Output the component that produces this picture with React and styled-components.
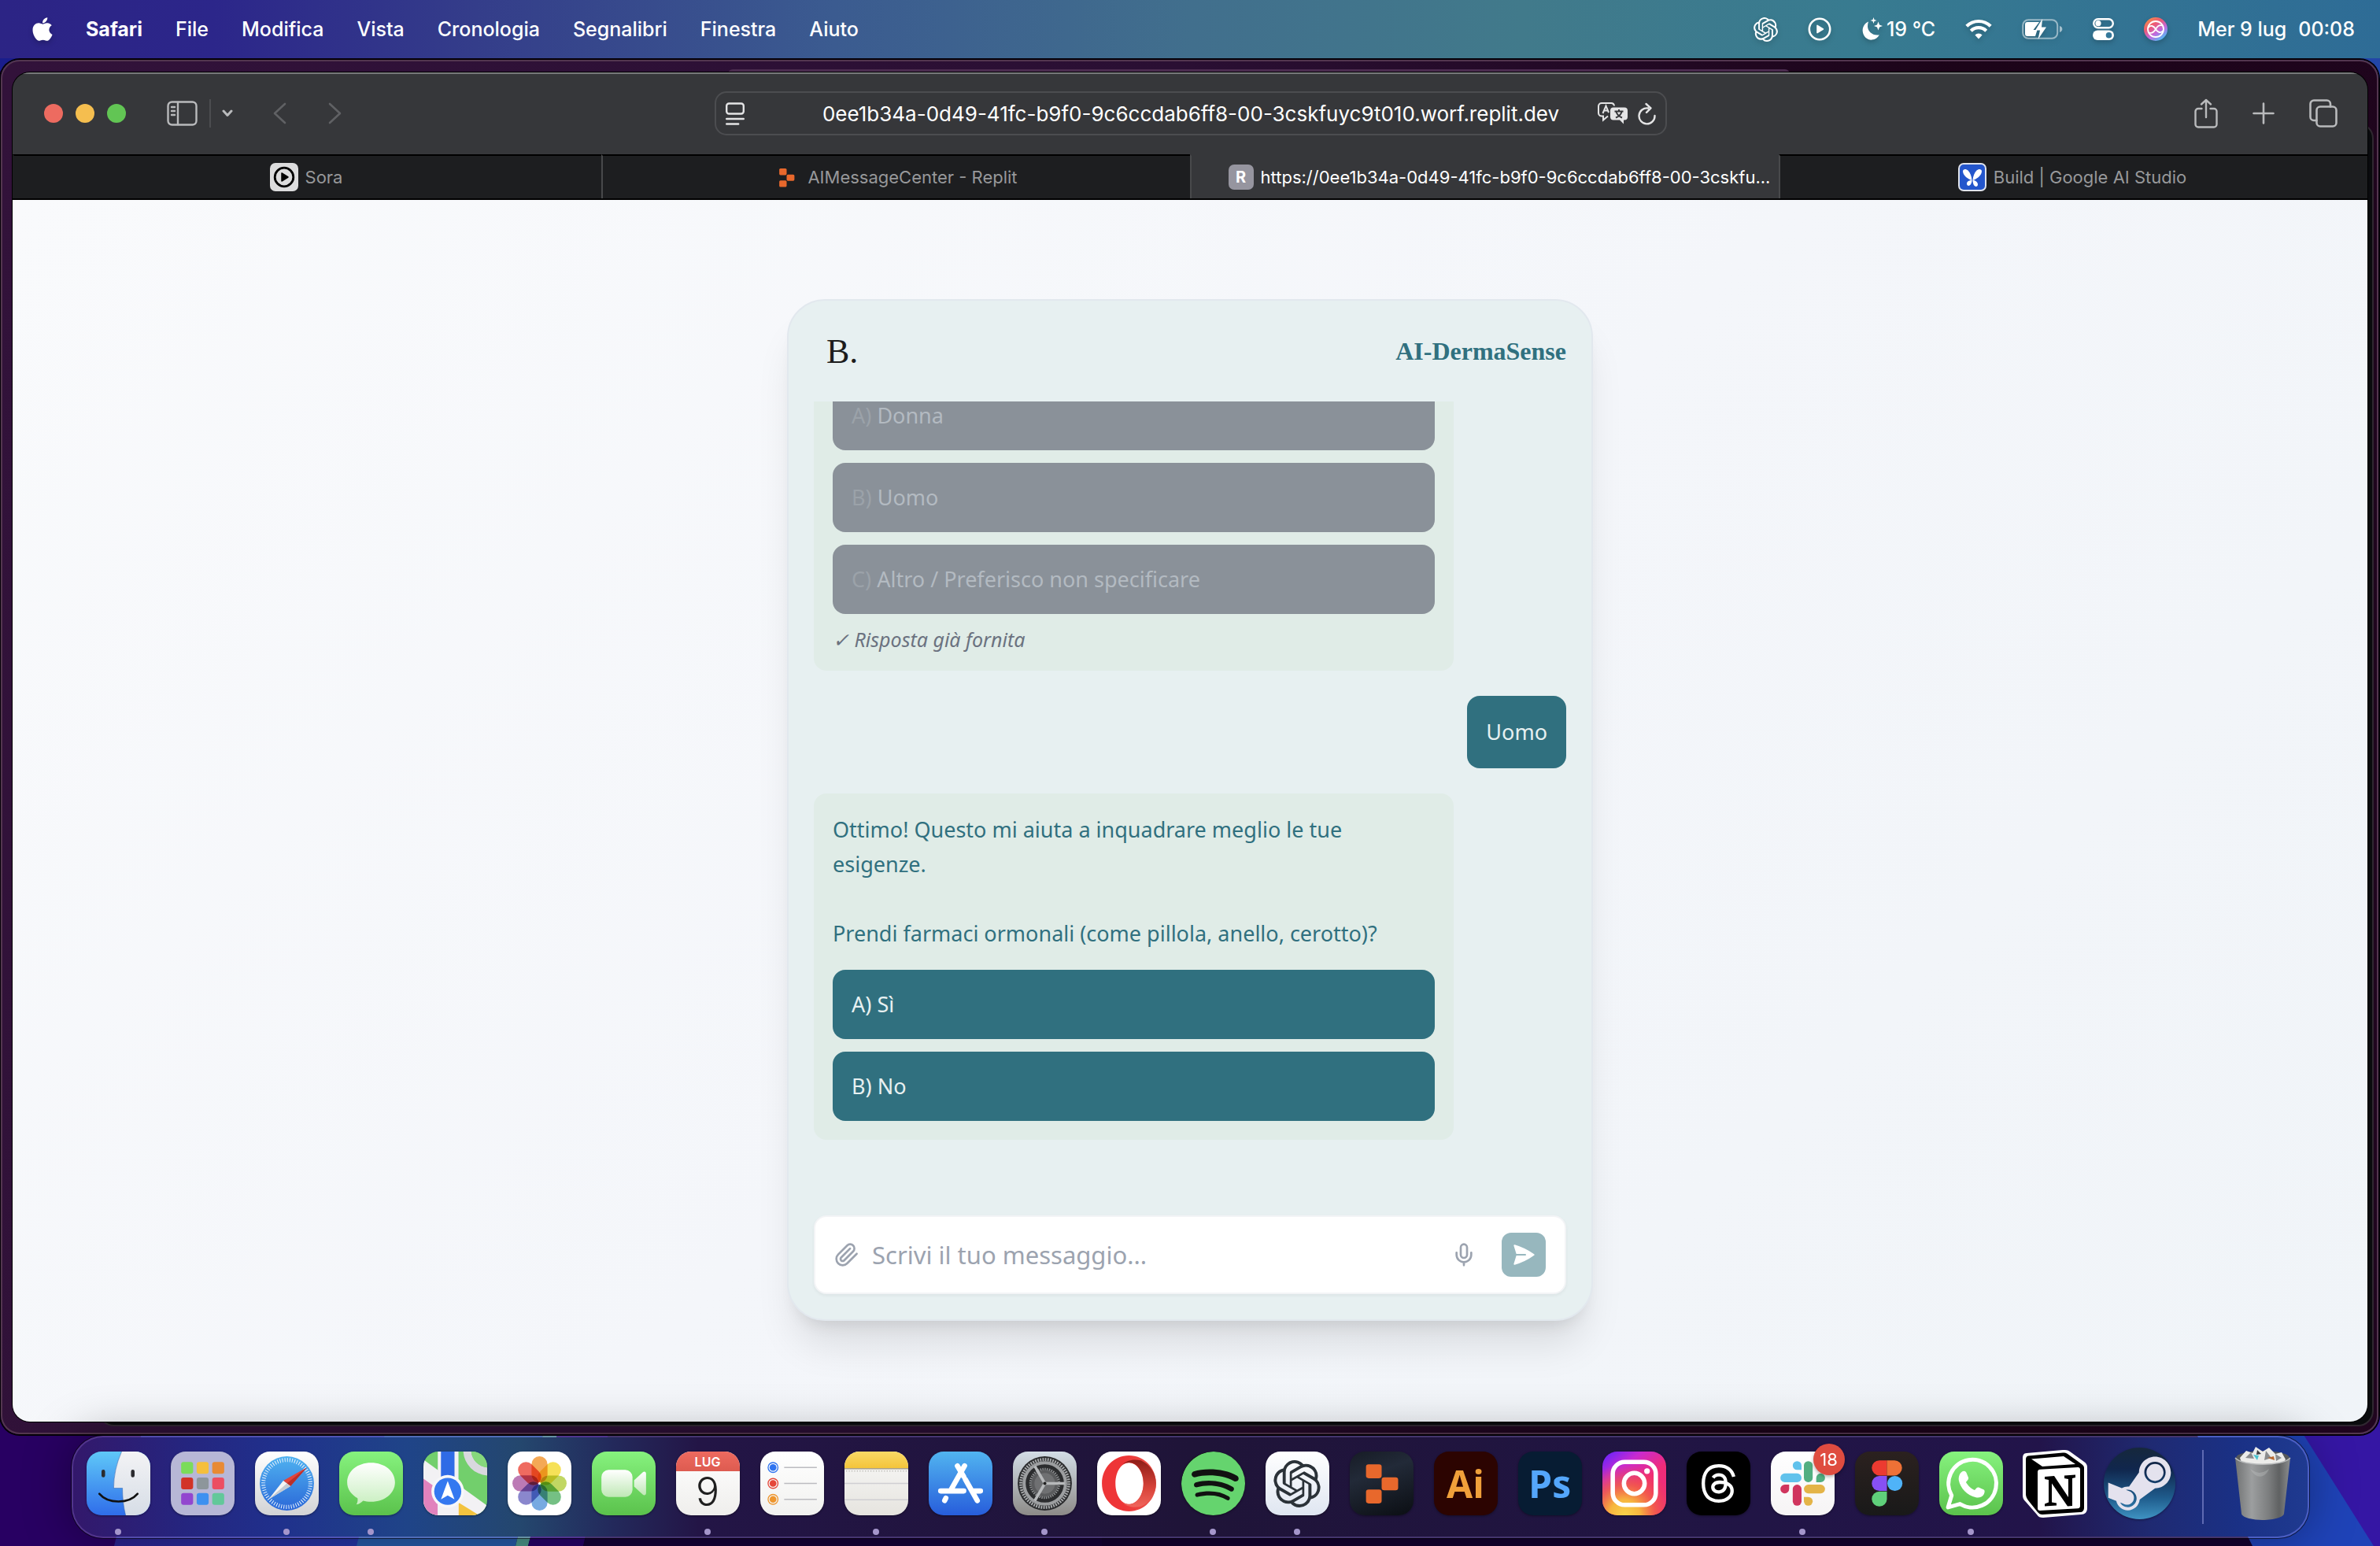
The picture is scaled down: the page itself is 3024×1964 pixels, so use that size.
import React from "react";
import styled, { createGlobalStyle, css } from "styled-components";
import { FaApple, FaSteamSymbol } from "react-icons/fa6";
import { HiPaperAirplane } from "react-icons/hi2";
import { SiOpenai, SiSpotify, SiThreads } from "react-icons/si";

const UI = `Inter, "Liberation Sans", sans-serif`;
const CHAT = `"Noto Sans", "Open Sans", sans-serif`;
const TEAL = "#30707f";

const Global = createGlobalStyle`
  *, *::before, *::after { box-sizing: border-box; }
  body { margin: 0; font-family: ${UI}; background: #16003a; }
  button { border: 0; padding: 0; margin: 0; background: none; font: inherit; color: inherit; }
  input { border: 0; padding: 0; margin: 0; background: none; font: inherit; color: inherit; outline: 0; min-width: 0; }
  svg { display: block; flex: none; }
`;

/* ---------- desktop ---------- */

const Desktop = styled.div`
  position: relative;
  display: flex;
  flex-direction: column;
  height: 100vh;
  overflow: hidden;
`;

const Wallpaper = styled.svg`
  position: absolute;
  inset: 0;
  width: 100%;
  height: 100%;
`;

const MenuBar = styled.header`
  position: relative;
  flex: none;
  display: flex;
  justify-content: space-between;
  align-items: center;
  height: 74px;
  padding: 0 32px 0 41px;
  color: #fff;
  font-size: 25px;
  font-weight: 500;
  background: linear-gradient(90deg, #2c2485 0%, #2c268a 9%, #343d8a 20%, #3b5b90 35%, #416f8d 50%, #417a8b 64%, #387b90 78%, #2e6c96 100%);
`;

const MenuGroup = styled.nav`
  display: flex;
  align-items: center;
  gap: ${(p) => p.$gap}px;
  text-shadow: 0 3px 6px rgba(0, 0, 0, 0.25);
  svg { filter: drop-shadow(0 3px 3px rgba(0, 0, 0, 0.2)); }
`;

const MenuItem = styled.button`
  display: flex;
  align-items: center;
  justify-content: center;
  gap: ${(p) => p.$gap || 0}px;
  width: ${(p) => (p.$width ? `${p.$width}px` : "auto")};
  font-weight: ${(p) => (p.$strong ? 700 : 500)};
  white-space: nowrap;
`;

/* ---------- windows ---------- */

const BackWindow = styled.div`
  position: relative;
  z-index: 0;
  flex: 1;
  min-height: 0;
  display: flex;
  margin: 2px 2px 0 1px;
  padding: 14px 12px 14px 13px;
  border: 2px solid #53364f;
  border-radius: 24px;
  background: linear-gradient(100deg, #32123a 0%, #2a0f33 45%, #1c0419 75%, #20051f 100%);
  box-shadow: 0 0 0 2px #050008;

  &::before {
    content: "";
    position: absolute;
    top: 10px;
    left: 922px;
    right: 746px;
    height: 6px;
    border-radius: 6px 6px 0 0;
    background: #4b2c4f;
  }
  &::after {
    content: "";
    position: absolute;
    top: 78px;
    right: 4px;
    bottom: 8px;
    left: 122px;
    border: 2px solid #2f2730;
    border-radius: 20px;
    background: #0a0b0e;
  }
`;

const Browser = styled.section`
  position: relative;
  z-index: 1;
  flex: 1;
  min-width: 0;
  display: flex;
  flex-direction: column;
  overflow: hidden;
  border-radius: 22px;
  background: #36373a;
  box-shadow: 0 0 0 1px #000;
`;

const Toolbar = styled.div`
  flex: none;
  display: grid;
  grid-template-columns: 1fr minmax(0, 1210px) 1fr;
  align-items: center;
  height: 104px;
  padding: 0 38px 2px 40px;
  border-top: 2px solid #77787a;
  color: #b9babc;
`;

const ToolGroup = styled.div`
  display: flex;
  align-items: center;
  justify-content: ${(p) => (p.$end ? "flex-end" : "flex-start")};
  gap: ${(p) => p.$gap}px;
`;

const Lights = styled.div`
  display: flex;
  gap: 16px;
  margin-right: 38px;
`;

const Light = styled.button`
  width: 24px;
  height: 24px;
  border-radius: 50%;
  background: ${(p) => p.$color};
`;

const Divider = styled.span`
  width: 2px;
  height: 36px;
  background: #4c4d50;
`;

const HistoryButtons = styled(ToolGroup)`
  margin-left: 36px;
  color: #606164;
`;

const AddressBar = styled.label`
  display: grid;
  grid-template-columns: 100px minmax(0, 1fr) 100px;
  align-items: center;
  height: 56px;
  padding: 0 12px;
  border: 2px solid #4c4d50;
  border-radius: 15px;
  color: #e4e4e5;
`;

const Address = styled.input`
  width: 100%;
  text-align: center;
  font-size: 26px;
  color: #fff;
`;

const TabStrip = styled.div`
  flex: none;
  display: grid;
  grid-template-columns: repeat(4, minmax(0, 1fr));
  height: 58px;
  border-bottom: 2px solid #000;
`;

const Tab = styled.button`
  display: flex;
  align-items: center;
  justify-content: center;
  gap: 9px;
  padding: 0 20px 0 16px;
  font-size: 22px;
  color: #97989a;
  background: #1d1e20;
  border-top: 2px solid #000;
  border-left: 2px solid #48494b;
  &:first-child { border-left-color: #1d1e20; }
  ${(p) =>
    p.$active &&
    css`
      padding: 0 8px 0 44px;
      color: #fff;
      background: #36373a;
      border-top-color: #36373a;
    `}
`;

const Favicon = styled.span`
  flex: none;
  display: grid;
  place-items: center;
  width: ${(p) => p.$size || 36}px;
  height: ${(p) => p.$size || 36}px;
  border-radius: 7px;
  font-weight: 700;
  font-size: 20px;
  color: #fff;
  background: ${(p) => p.$bg || "none"};
`;

const TabTitle = styled.span`
  overflow: hidden;
  white-space: nowrap;
  text-overflow: ellipsis;
`;

/* ---------- chat page ---------- */

const Page = styled.main`
  flex: 1;
  min-height: 0;
  display: flex;
  justify-content: center;
  padding: 126px 32px 128px;
  background: linear-gradient(135deg, #f9fafc 0%, #f4f6fa 50%, #f0f4f8 100%);
  font-family: ${CHAT};
`;

const ChatCard = styled.article`
  flex: 1;
  max-width: 1024px;
  min-height: 0;
  display: flex;
  flex-direction: column;
  gap: 32px;
  padding: 32px;
  border: 2px solid #e2e8ee;
  border-radius: 48px;
  background: #e7f0f1;
  box-shadow: 0 40px 50px -10px rgba(0, 0, 0, 0.1), 0 16px 20px -12px rgba(0, 0, 0, 0.1);
`;

const ChatHeader = styled.header`
  flex: none;
  display: flex;
  align-items: center;
  justify-content: space-between;
  height: 64px;
  padding-left: 16px;
  font-family: "Liberation Serif", serif;
`;

const Logo = styled.span`
  font-size: 44px;
  color: #1c1c1c;
`;

const Title = styled.h1`
  margin: 0;
  font-size: 32px;
  font-weight: 700;
  color: ${TEAL};
`;

const Messages = styled.div`
  flex: 1;
  min-height: 0;
  display: flex;
  flex-direction: column;
  justify-content: flex-end;
  gap: 32px;
  padding-bottom: 64px;
  overflow: hidden;
`;

const Bubble = styled.div`
  flex: none;
  padding: 24px;
  border-radius: 16px;
  font-size: 27px;
  line-height: 44px;
  ${(p) =>
    p.$mine
      ? css`
          align-self: flex-end;
          color: #e7f0f1;
          background: ${TEAL};
        `
      : css`
          width: 85%;
          color: ${TEAL};
          background: #e0ece7;
        `}
`;

const Text = styled.p`
  margin: 0 0 ${(p) => (p.$last ? 24 : 44)}px;
`;

const Options = styled.div`
  display: grid;
  gap: 16px;
`;

const Option = styled.button`
  height: 88px;
  padding: 0 24px;
  border-radius: 16px;
  text-align: left;
  font-size: 27px;
  color: #e7f0f1;
  background: ${TEAL};
  &:disabled {
    color: #b3bac1;
    background: #8a9199;
  }
  &:disabled span { color: #9ba2a9; }
`;

const Status = styled.p`
  margin: 16px 0 0;
  font-size: 25px;
  line-height: 32px;
  font-style: italic;
  color: #6b7280;
`;

const Composer = styled.form`
  flex: none;
  display: flex;
  align-items: center;
  gap: 16px;
  padding: 20px 24px;
  border: 2px solid #f3f4f6;
  border-radius: 16px;
  background: #fff;
  box-shadow: 0 2px 4px rgba(0, 0, 0, 0.05);
  color: #9ca3af;
`;

const MessageInput = styled.input`
  flex: 1;
  height: 56px;
  font-size: 31px;
  color: #374151;
  &::placeholder { color: #9ca3af; opacity: 1; }
`;

const SendButton = styled.button`
  display: grid;
  place-items: center;
  width: 56px;
  height: 56px;
  margin-left: 16px;
  border-radius: 12px;
  color: #fff;
  background: #97b7be;
`;

/* ---------- dock ---------- */

const DockBar = styled.footer`
  position: relative;
  z-index: 1;
  flex: none;
  align-self: center;
  display: flex;
  align-items: center;
  height: 130px;
  margin: 2px 0 10px;
  padding: 0 11px 0 4px;
  border: 2px solid rgba(150, 140, 210, 0.38);
  border-radius: 40px;
  background: linear-gradient(90deg, #33186b 0%, #25257f 5%, #20308c 9%, #1f4488 15%, #24476e 20%, #232a5c 24%, #231546 28%, #1f1438 50%, #211545 75%, #22144a 88%, #1f2a72 93%, #1a3186 97%, #1f3a90 100%) padding-box;
  box-shadow: 0 0 60px rgba(0, 0, 0, 0.35), 0 0 0 1px rgba(0, 0, 0, 0.6);
`;

const DockItem = styled.button`
  position: relative;
  display: grid;
  place-items: center;
  width: ${(p) => p.$width || 107}px;
  height: 100%;
  padding-bottom: 9px;
  ${(p) =>
    p.$running &&
    css`
      &::after {
        content: "";
        position: absolute;
        left: calc(50% - 4px);
        bottom: 2px;
        width: 8px;
        height: 8px;
        border-radius: 50%;
        background: #a596cb;
      }
    `}
`;

const Tile = styled.span`
  display: grid;
  place-items: center;
  width: 81px;
  height: 81px;
  border-radius: ${(p) => (p.$round ? "50%" : "19px")};
  overflow: hidden;
  background: ${(p) => p.$bg};
  color: ${(p) => p.$color || "#fff"};
  box-shadow: 0 1px 3px rgba(0, 0, 0, 0.4);
`;

const AdobeMark = styled.span`
  font-family: "Open Sans", sans-serif;
  font-weight: 700;
  font-size: 48px;
  line-height: 80px;
`;

const CalendarFace = styled.span`
  display: grid;
  grid-template-rows: 25px 1fr;
  width: 100%;
  height: 100%;
  text-align: center;
  background: linear-gradient(#fff, #efeeec);
`;

const CalendarMonth = styled.span`
  font-size: 16px;
  font-weight: 600;
  line-height: 27px;
  color: #fff;
  background: linear-gradient(#ee6a5f, #dd5b50);
`;

const CalendarDay = styled.span`
  font-size: 50px;
  font-weight: 300;
  line-height: 52px;
  color: #1f1f1f;
`;

const Badge = styled.span`
  position: absolute;
  top: 8px;
  right: 0;
  width: 40px;
  height: 40px;
  border-radius: 50%;
  font-size: 22px;
  line-height: 40px;
  color: #fff;
  background: #df4c40;
  box-shadow: 0 2px 4px rgba(0, 0, 0, 0.3);
`;

const DockSeparator = styled.span`
  width: 2px;
  height: 94px;
  margin: 0 30px 0 26px;
  background: rgba(160, 165, 230, 0.5);
`;

/* ---------- small icons ---------- */

const Line = ({ w = 32, h, box, sw = 2, children }) => (
  <svg width={w} height={h || w} viewBox={box} fill="none" stroke="currentColor" strokeWidth={sw} strokeLinecap="round" strokeLinejoin="round">
    {children}
  </svg>
);

const PlayCircle = () => (
  <Line w={30} box="0 0 30 30" sw={2.6}>
    <circle cx="15" cy="15" r="13.2" />
    <path d="M12 10.4v9.2l7.4-4.6z" fill="currentColor" strokeWidth="1.6" />
  </Line>
);
const MoonStars = () => (
  <svg width="28" height="30" viewBox="0 0 28 30" fill="currentColor">
    <path d="M9 5.5C3.500 8 1 13 1.800 18.500 2.800 25 8 29 13.500 28.600c4-.3 7.500-2.600 9.300-6.300C15 24 8 18 8 11.500c0-2.200.3-4.200 1-6z" />
    <path d="M15.500 0l1 3 3 1-3 1-1 3-1-3-3-1 3-1zM21.500 5.500l1.500 4 4 1.500-4 1.500-1.500 4-1.500-4-4-1.500 4-1.500z" />
  </svg>
);
const Wifi = () => (
  <svg width="34" height="26" viewBox="0 0 34 26" fill="none" stroke="currentColor" strokeWidth="4.200">
    <path d="M1.800 9.300a21.500 21.500 0 0 1 30.400 0M7.300 15.200a13.700 13.700 0 0 1 19.400 0" />
    <path d="M17 25.500l-4.600-5a6.500 6.500 0 0 1 9.200 0z" fill="currentColor" stroke="none" />
  </svg>
);
const Battery = () => (
  <svg width="52" height="26" viewBox="0 0 52 26">
    <rect x="1.200" y="1.200" width="44" height="23.600" rx="7" fill="none" stroke="#fff" strokeOpacity=".5" strokeWidth="2" />
    <path d="M48 9c2.500.8 3.300 2.200 3.300 4s-.8 3.200-3.300 4z" fill="#fff" fillOpacity=".55" />
    <path d="M7 4h15l-7.500 10h5L17 22H7a3 3 0 0 1-3-3V7a3 3 0 0 1 3-3z" fill="#fff" />
    <path d="M26 0L17 14.500h6L20.500 26 31 10.500h-6z" fill="#fff" />
  </svg>
);
const ControlCenter = () => (
  <svg width="27" height="28" viewBox="0 0 27 28">
    <rect x="1.200" y="1.200" width="24.600" height="11" rx="5.500" fill="none" stroke="#fff" strokeWidth="2.400" />
    <circle cx="7" cy="6.700" r="3.600" fill="#fff" />
    <rect y="15.500" width="27" height="12.500" rx="6.200" fill="#fff" />
    <circle cx="20.500" cy="21.700" r="3.800" fill="#35789a" />
  </svg>
);
const Siri = () => (
  <svg width="30" height="30" viewBox="0 0 30 30">
    <defs>
      <linearGradient id="siri" x1="0" y1="0" x2=".7" y2="1">
        <stop offset="0" stopColor="#f7a13c" /><stop offset=".4" stopColor="#ee5a72" /><stop offset=".7" stopColor="#c06ae0" /><stop offset="1" stopColor="#4cc0f5" />
      </linearGradient>
    </defs>
    <circle cx="15" cy="15" r="15" fill="url(#siri)" />
    <g fill="none" stroke="#fff" strokeWidth="1.800">
      <circle cx="15" cy="15" r="10" />
      <path d="M5.500 13c3-3.500 7-2.500 9.500 2s6.500 5.500 9.500 2M6.500 19.500c4 1.500 6.500-1 8.500-4.500s4.500-6 8.500-4.500" />
    </g>
  </svg>
);
const SidebarIcon = () => (
  <Line w={40} h={32} box="0 0 40 32" sw={2.4}>
    <rect x="1.500" y="1.500" width="36" height="29" rx="5" />
    <path d="M14 2v28M6 8h4M6 13h4M6 18h4" />
  </Line>
);
const Translate = () => (
  <svg width="38" height="28" viewBox="0 0 38 28">
    <path d="M13 17.500l-6 5v-5H5a4 4 0 0 1-4-4V5a4 4 0 0 1 4-4h12a4 4 0 0 1 4 3.500" fill="none" stroke="currentColor" strokeWidth="2" />
    <path d="M6.500 14L10.500 4.500 14 13M8 10.500h5" fill="none" stroke="currentColor" strokeWidth="2" />
    <path d="M20 6.500h14a4 4 0 0 1 4 4v8a4 4 0 0 1-4 4h-1v5l-5-5h-8a4 4 0 0 1-4-4v-8a4 4 0 0 1 4-4z" fill="currentColor" />
    <path d="M21.500 11.500h11M27 9v2.500M30.500 12c-1 3.500-3.500 6-7.500 7.500M23.500 12c1.200 3.500 3.500 6 7.500 7.500" fill="none" stroke="#36373a" strokeWidth="2" />
  </svg>
);
const Blocks = ({ size }) => (
  <svg width={size} height={size} viewBox="0 0 24 24" fill="#e8682c">
    <rect x="3" y="1" width="9" height="8" rx="1.500" /><rect x="12" y="8.500" width="9.500" height="7.500" rx="1.500" /><rect x="3" y="15.500" width="9" height="8" rx="1.500" />
  </svg>
);

/* ---------- app artwork ---------- */

const Art = ({ size = 81, children }) => (
  <svg width={size} height={size} viewBox="0 0 80 80">{children}</svg>
);

const Finder = () => (
  <Art>
    <defs>
      <linearGradient id="fi" x2="0" y2="1"><stop stopColor="#5fc8f8" /><stop offset="1" stopColor="#2f6dea" /></linearGradient>
      <linearGradient id="fi2" x2="0" y2="1"><stop stopColor="#f3f3f5" /><stop offset="1" stopColor="#d6dde6" /></linearGradient>
    </defs>
    <rect width="80" height="80" fill="url(#fi)" />
    <path d="M44 0C37 16 34 30 34 46h11c0 12 1 22 4 34h31V0z" fill="url(#fi2)" />
    <path d="M44 0C37 16 34 30 34 46h11c0 12 1 22 4 34" fill="none" stroke="#2b5fae" strokeOpacity=".5" />
    <path d="M21 25v5M58 25v5" stroke="#2b2b2f" strokeWidth="4.500" strokeLinecap="round" />
    <path d="M16 53c11 13 37 13 48 0" fill="none" stroke="#111" strokeWidth="2.600" strokeLinecap="round" />
  </Art>
);
const Launchpad = () => (
  <Art>
    {["#7bdc5a", "#f5bf3c", "#e88a34", "#d23327", "#8d969b", "#ec4e62", "#9246cf", "#3d90f0", "#62c89a"].map((c, i) => (
      <rect key={c} x={13 + (i % 3) * 19.500} y={13 + Math.floor(i / 3) * 19.500} width="15" height="15" rx="3" fill={c} />
    ))}
  </Art>
);
const SafariArt = () => (
  <Art>
    <defs><linearGradient id="sf" x2="0" y2="1"><stop stopColor="#4fb2f0" /><stop offset="1" stopColor="#2b68d8" /></linearGradient></defs>
    <circle cx="40" cy="40" r="34" fill="url(#sf)" />
    <circle cx="40" cy="40" r="29.500" fill="none" stroke="#e8f2fd" strokeWidth="5" strokeDasharray="1 2.090" />
    <path d="M65 20L35.500 36.500l9 7z" fill="#e0443c" />
    <path d="M65 20L40 40l4.500 3.500z" fill="#b92f2b" />
    <path d="M17 60l18.500-23.500 9 7z" fill="#f4f4f4" />
    <path d="M17 60L40 40l4.500 3.500z" fill="#c5cad2" />
  </Art>
);
const MessagesArt = () => (
  <Art>
    <defs><linearGradient id="ms" x2="0" y2="1"><stop stopColor="#fff" /><stop offset="1" stopColor="#c9efc0" /></linearGradient></defs>
    <path d="M40 14c17 0 30 10.500 30 24.500S57 63 40 63c-4 0-7-.4-10-1.300-2 2-5 4.300-8.500 4.800 1.500-2.300 2-5 1.500-8C15 54 10 47 10 38.500 10 24.500 23 14 40 14z" fill="url(#ms)" />
  </Art>
);
const MapsArt = () => (
  <Art>
    <rect width="80" height="80" fill="#72cf6c" />
    <path d="M0 10L80 68v12H0z" fill="#f2f1f4" />
    <path d="M0 34l18 13v33H0z" fill="#e182bd" />
    <path d="M44 64l26 16H44z" fill="#f3c33f" />
    <path d="M50 0a32 32 0 0 0 30 30V20A22 22 0 0 1 60 0z" fill="#d8d8de" />
    <path d="M60 0a22 22 0 0 0 20 20V0z" fill="#86d77c" />
    <path d="M18 0h26v80H18z" fill="#f2f1f4" />
    <path d="M22 0h17v50H22z" fill="#2f6be6" />
    <circle cx="30.500" cy="50" r="20.500" fill="#f7f7f9" />
    <circle cx="30.500" cy="50" r="17" fill="#3478f0" />
    <path d="M30.500 37l8.500 23-8.500-5-8.500 5z" fill="#fff" />
  </Art>
);
const Petal = styled.rect`
  mix-blend-mode: multiply;
`;
const PhotosArt = () => (
  <Art>
    {["#f29a38", "#f4dc3a", "#b6d048", "#5db56e", "#5f9bdc", "#7572c4", "#b063a8", "#ec5144"].map((c, i) => (
      <Petal key={c} x="30" y="6" width="20" height="33" rx="10" fill={c} fillOpacity=".85" transform={`rotate(${i * 45} 40 40)`} />
    ))}
    <circle cx="40" cy="40" r="1.500" fill="#fff" />
  </Art>
);
const FaceTimeArt = () => (
  <Art>
    <defs><linearGradient id="ft" x2="0" y2="1"><stop stopColor="#fff" /><stop offset="1" stopColor="#bfe8b5" /></linearGradient></defs>
    <rect x="12" y="23" width="39" height="34" rx="9" fill="url(#ft)" />
    <path d="M53 36l11-10c2-1.500 4-.5 4 2v24c0 2.500-2 3.500-4 2L53 44z" fill="url(#ft)" />
  </Art>
);
const RemindersArt = () => (
  <Art>
    {["#2f74f0", "#e5473a", "#ee962e"].map((c, i) => (
      <g key={c} transform={`translate(0 ${20 + i * 20})`}>
        <circle cx="16" cy="0" r="6.200" fill="none" stroke={c} strokeWidth="1.300" /><circle cx="16" cy="0" r="4.300" fill={c} />
        <path d="M30 0h41" stroke="#bbbbc0" strokeWidth="1.400" />
      </g>
    ))}
  </Art>
);
const NotesArt = () => (
  <Art>
    <defs><linearGradient id="no" x2="0" y2="1"><stop stopColor="#f9d966" /><stop offset="1" stopColor="#f4c43a" /></linearGradient></defs>
    <rect width="80" height="21" fill="url(#no)" />
    <path d="M0 21.500h80" stroke="#aaa188" strokeWidth="1.500" />
    <path d="M2 24.500h76" stroke="#bbb9b4" strokeWidth="1.500" strokeDasharray="1.200 2.200" />
    <path d="M0 40h80M0 60.500h80" stroke="#cfcfd2" strokeWidth="1.400" />
  </Art>
);
const AppStoreArt = () => (
  <Art>
    <g stroke="#fff" strokeWidth="6.500" strokeLinecap="round" fill="none">
      <path d="M45 18L28.500 47M21.500 58.500l-1.500 3M36 18l8 13.500M46 35l15 26.500M15 49.500h29M57 49.500h8" />
    </g>
  </Art>
);
const SettingsArt = () => (
  <Art>
    <circle cx="40" cy="40" r="34" fill="#2b2c2e" />
    <circle cx="40" cy="40" r="30" fill="none" stroke="#a9abad" strokeWidth="4" strokeDasharray="1.800 1.340" />
    <circle cx="40" cy="40" r="26" fill="none" stroke="#9c9ea0" strokeWidth="4" />
    <circle cx="40" cy="40" r="17" fill="#5a5b5d" />
    <circle cx="40" cy="40" r="18" fill="none" stroke="#8b8d8f" strokeWidth="3" strokeDasharray="1.500 1.300" />
    <circle cx="40" cy="40" r="13" fill="#6f7072" />
    <path d="M40 40h25M40 40L27.500 18.500M40 40L27.500 61.500" stroke="#b7b9bb" strokeWidth="3.500" />
    <circle cx="40" cy="40" r="2" fill="#222" />
  </Art>
);
const OperaArt = () => (
  <Art>
    <defs><linearGradient id="op" x1="0" y1="0" x2="1" y2="0"><stop offset=".4" stopColor="#ee3537" /><stop offset="1" stopColor="#e9564c" /></linearGradient>
      <linearGradient id="op2" x2="0" y2="1"><stop stopColor="#8e1d17" /><stop offset=".6" stopColor="#d8443a" /><stop offset="1" stopColor="#f0655c" /></linearGradient></defs>
    <path fillRule="evenodd" d="M40 5c19 0 34 15.500 34 35S59 75 40 75 6 59.500 6 40 21 5 40 5zm0 9c-9.500 0-17 11-17 26s7.500 26 17 26 18-11 18-26-8.500-26-18-26z" fill="url(#op)" />
    <path d="M31 17c5-6 14-8 24-6 11 5 19 16 19 29s-8 24-19 29c-10 2-19 0-24-6 4 3.500 13 5 19-1 11-11 11-33 0-44-6-6-15-4.500-19-1z" fill="url(#op2)" />
  </Art>
);
const InstagramArt = () => (
  <Art>
    <defs>
      <linearGradient id="ig" x1="0" y1="0" x2=".8" y2="1"><stop stopColor="#5b23ff" /><stop offset=".3" stopColor="#c92ad0" /><stop offset=".6" stopColor="#f02c78" /><stop offset="1" stopColor="#ee2f7c" /></linearGradient>
      <radialGradient id="ig2" cx=".35" cy="1" r=".8"><stop stopColor="#f9d34a" /><stop offset=".3" stopColor="#f7b63f" /><stop offset=".6" stopColor="#f3663f" stopOpacity=".75" /><stop offset="1" stopColor="#f3463f" stopOpacity="0" /></radialGradient>
    </defs>
    <rect width="80" height="80" fill="url(#ig)" /><rect width="80" height="80" fill="url(#ig2)" />
    <g fill="none" stroke="#fff" strokeWidth="5.500">
      <rect x="13" y="13" width="54" height="54" rx="15" /><circle cx="40" cy="40" r="13" />
    </g>
    <circle cx="56" cy="24.500" r="3.600" fill="#fff" />
  </Art>
);
const SlackArt = () => (
  <Art>
    <g strokeWidth="11" strokeLinecap="round" fill="none">
      <path d="M17.500 33H33" stroke="#61c2ec" /><path d="M47 17.500V33" stroke="#52ae81" /><path d="M47 47h15.500" stroke="#e4b448" /><path d="M33 47v15.500" stroke="#d0355e" />
    </g>
    <path d="M38.500 23H33a5.500 5.500 0 1 1 5.500-5.500z" fill="#61c2ec" />
    <path d="M57 38.500V33a5.500 5.500 0 1 1 5.500 5.500z" fill="#52ae81" />
    <path d="M41.500 57H47a5.500 5.500 0 1 1-5.500 5.500z" fill="#e4b448" />
    <path d="M23 41.500V47a5.500 5.500 0 1 1-5.500-5.500z" fill="#d0355e" />
  </Art>
);
const FigmaArt = () => (
  <Art>
    <path d="M40 11H30.500a9.500 9.500 0 0 0 0 19H40z" fill="#ec3a30" /><path d="M40 11h9.500a9.500 9.500 0 0 1 0 19H40z" fill="#ee7136" />
    <path d="M40 30.500h-9.500a9.500 9.500 0 0 0 0 19H40z" fill="#8750f4" /><circle cx="50" cy="40" r="9.500" fill="#4fb3f8" />
    <path d="M40 50h-9.500a9.500 9.500 0 1 0 9.500 9.500z" fill="#5fd07a" />
  </Art>
);
const WhatsAppArt = () => (
  <Art>
    <path d="M11 70l4.500-15A30 30 0 1 1 26 65.800z" fill="none" stroke="#fff" strokeWidth="5" strokeLinejoin="round" />
    <path d="M29 25c2-1 4-.5 5 1.500l2.500 6c.5 1.500 0 2.500-3 6 3 5 6 7.500 11 10 2.500-3.500 3.500-4 5-3.500l6.500 3c1.500 1 1 3.500 0 5.500-2 3.500-6 4.800-10 4C35 55 26.500 46 24.500 36c-.5-4 1-9 4.500-11z" fill="#fff" />
  </Art>
);
const Trash = () => (
  <svg width="72" height="94" viewBox="0 0 72 94">
    <defs><linearGradient id="tr"><stop stopColor="#707273" /><stop offset=".3" stopColor="#9c9e9f" /><stop offset=".6" stopColor="#7d7f80" /><stop offset=".8" stopColor="#5f6162" /><stop offset="1" stopColor="#8c8e8f" /></linearGradient></defs>
    <ellipse cx="36" cy="14" rx="34" ry="9" fill="#57595b" />
    <path d="M7 14l8-9 8 3 4-8 9 6 8-5 8 8 8-2 5 9-4 7H10z" fill="#ececea" />
    <path d="M14 14l7-7 4 8zM40 5l7 9-9 3zM52 9l8 5-7 4z" fill="#8a8c8e" />
    <path d="M24 10l7 1-2 6z" fill="#4cc4cf" /><path d="M42 14l8-2 1 5z" fill="#b86a33" /><path d="M29 4l5 5-6 1z" fill="#3a3b3d" />
    <path d="M1 14c10 11 60 11 70 0l-8 71c-.5 4-12 8-27 8S9.500 89 9 85z" fill="url(#tr)" />
    <path d="M1 14c10 11 60 11 70 0" fill="none" stroke="#b9bbbc" strokeWidth="1.500" />
    <path d="M20 28c8 6 14 7 24 0-5 12-16 14-24 0z" fill="#c4c6c7" fillOpacity=".35" />
  </svg>
);
const NotionArt = () => (
  <svg width="82" height="86" viewBox="0 0 82 86">
    <path d="M5 4l46-4c4 0 6 0 9 2l18 13c3 2 4 4 4 7v52c0 5-3 8-8 8l-48 4c-4 0-6-1-8-4L4 66c-3-3-4-5-4-9V11c0-4 1-7 5-7z" fill="#fff" />
    <path d="M7 7.500l44-4c3 0 4 0 6 1.500l18 13c2 1.500 3 3 3 5v50c0 4-2 6-5 6l-48 3c-3 0-4-1-6-3L7 64c-2-3-3-5-3-8V12c0-2.500 1-4.300 3-4.500z" fill="#000" />
    <path d="M11 11.500l41-3.500 15 10-42 3z" fill="#fff" />
    <path d="M19 28c0-2 1-3 3-3.200L70 22c2-.1 3 1 3 3v46c0 2-1 3-3 3.200L22 77c-2 .1-3-1-3-3z" fill="#fff" />
    <path d="M28 34l12-1 18 27V37l-5-1v-3.500l14-1V35l-4 1v35l-6 .5-20-29v24l6 1v3l-15 1v-3l5-2V38l-5-1z" fill="#000" />
  </svg>
);

const GREEN = "linear-gradient(#86f27e, #5bc24c)";
const APPS = [
  { name: "Finder", art: <Finder />, running: true },
  { name: "Launchpad", bg: "#b7b7d6", art: <Launchpad /> },
  { name: "Safari", bg: "linear-gradient(#fff, #d2d3d5)", art: <SafariArt />, running: true },
  { name: "Messaggi", bg: GREEN, art: <MessagesArt />, running: true },
  { name: "Mappe", art: <MapsArt /> },
  { name: "Foto", bg: "#fff", art: <PhotosArt /> },
  { name: "FaceTime", bg: GREEN, art: <FaceTimeArt /> },
  { name: "Calendario", art: <CalendarFace><CalendarMonth>LUG</CalendarMonth><CalendarDay>9</CalendarDay></CalendarFace>, running: true },
  { name: "Promemoria", bg: "linear-gradient(#fff, #f1f1ef)", art: <RemindersArt /> },
  { name: "Note", bg: "linear-gradient(#f8f8f7, #e6e4df)", art: <NotesArt />, running: true },
  { name: "App Store", bg: "linear-gradient(#51b4f0, #275ddb)", art: <AppStoreArt /> },
  { name: "Impostazioni", bg: "linear-gradient(#d3dde6, #8d8b88)", art: <SettingsArt />, running: true },
  { name: "Opera", bg: "#fff", art: <OperaArt /> },
  { name: "Spotify", bg: "#111", color: "#65d46e", round: true, art: <SiSpotify size={84} />, running: true },
  { name: "ChatGPT", bg: "linear-gradient(#fff, #dfe6f1)", color: "#2b3238", art: <SiOpenai size={60} />, running: true },
  { name: "Replit", bg: "linear-gradient(160deg, #171c26, #222a38 35%, #0b0e13)", art: <Blocks size={53} /> },
  { name: "Illustrator", bg: "#2c0401", color: "#f0a03a", art: <AdobeMark>Ai</AdobeMark> },
  { name: "Photoshop", bg: "#071c33", color: "#54a6fb", art: <AdobeMark>Ps</AdobeMark> },
  { name: "Instagram", art: <InstagramArt /> },
  { name: "Threads", bg: "#000", art: <SiThreads size={49} /> },
  { name: "Slack", bg: "linear-gradient(#fff, #f6f4f5)", art: <SlackArt />, running: true, badge: 18 },
  { name: "Figma", bg: "linear-gradient(#2b211f, #191919)", art: <FigmaArt /> },
  { name: "WhatsApp", bg: GREEN, art: <WhatsAppArt />, running: true },
];

const SteamTile = styled(Tile)`
  width: 91px;
  height: 91px;
`;

const Answer = ({ prefix, children }) => (
  <>
    <span>{prefix}</span> {children}
  </>
);

export default function App() {
  return (
    <Desktop>
      <Global />
      <Wallpaper viewBox="0 0 3024 1964" preserveAspectRatio="none" aria-hidden="true">
        <defs>
          <linearGradient id="w1" x2="1" y2="0"><stop stopColor="#2b2490" /><stop offset="1" stopColor="#2438a8" /></linearGradient>
        </defs>
        <rect width="3024" height="1964" fill="#13002f" />
        <path d="M0 0H400V1964H0z" fill="#280062" />
        <path d="M190 1780L145 1964H455L520 1700z" fill="url(#w1)" />
        <path d="M520 1700L453 1964H655L720 1700z" fill="#2759a6" />
        <path d="M720 1700L655 1964H671L740 1700z" fill="#4b9488" />
        <path d="M740 1700L671 1964H741L800 1700z" fill="#260066" />
        <path d="M800 1780L741 1964H1400V1780z" fill="#150036" />
        <path d="M2700 0H3024V1964H2862L2780 1800z" fill="#1f43b8" />
        <path d="M2900 1780H3024V1964H3016z" fill="#3516a4" />
        <path d="M0 70H900V90H0z" fill="#1a1d8c" /><path d="M900 70H1900V90H900z" fill="#4f7a52" /><path d="M1900 70H3024V120H1900z" fill="#2246a8" />
      </Wallpaper>

      <MenuBar>
        <MenuGroup $gap={42} aria-label="Menu">
          <MenuItem $width={26} aria-label="Apple"><FaApple size={34} /></MenuItem>
          <MenuItem $strong>Safari</MenuItem>
          {["File", "Modifica", "Vista", "Cronologia", "Segnalibri", "Finestra", "Aiuto"].map((m) => (
            <MenuItem key={m}>{m}</MenuItem>
          ))}
        </MenuGroup>
        <MenuGroup $gap={38} aria-label="Stato">
          <MenuItem aria-label="ChatGPT"><SiOpenai size={31} /></MenuItem>
          <MenuItem aria-label="Riproduci"><PlayCircle /></MenuItem>
          <MenuItem $gap={4}><MoonStars />19 °C</MenuItem>
          <MenuItem aria-label="Wi-Fi"><Wifi /></MenuItem>
          <MenuItem aria-label="Batteria"><Battery /></MenuItem>
          <MenuItem aria-label="Centro di Controllo"><ControlCenter /></MenuItem>
          <MenuItem aria-label="Siri"><Siri /></MenuItem>
          <MenuItem $gap={15}><span>Mer 9 lug</span><span>00:08</span></MenuItem>
        </MenuGroup>
      </MenuBar>

      <BackWindow>
        <Browser>
          <Toolbar>
            <ToolGroup $gap={14}>
              <Lights>
                <Light $color="#ed6b60" aria-label="Chiudi" />
                <Light $color="#f5be4f" aria-label="Riduci" />
                <Light $color="#62c554" aria-label="Ingrandisci" />
              </Lights>
              <button aria-label="Barra laterale"><SidebarIcon /></button>
              <Divider />
              <button aria-label="Gruppi di pannelli"><Line w={14} h={10} box="0 0 14 10" sw={3}><path d="M2 2l5 5.500L12 2" /></Line></button>
              <HistoryButtons $gap={53}>
                <button aria-label="Indietro"><Line w={18} h={28} box="0 0 18 28" sw={2.6}><path d="M16 2L3 14l13 12" /></Line></button>
                <button aria-label="Avanti"><Line w={18} h={28} box="0 0 18 28" sw={2.6}><path d="M2 2l13 12L2 26" /></Line></button>
              </HistoryButtons>
            </ToolGroup>
            <AddressBar>
              <Line w={24} h={29} box="0 0 24 29" sw={2.4}>
                <rect x="1.200" y="1.500" width="21.600" height="13" rx="3" /><path d="M1.200 21h21.600M1.200 27.500h15" />
              </Line>
              <Address aria-label="Indirizzo" readOnly value="0ee1b34a-0d49-41fc-b9f0-9c6ccdab6ff8-00-3cskfuyc9t010.worf.replit.dev" />
              <ToolGroup $gap={13} $end>
                <Translate />
                <Line w={23} h={29} box="0 0 23 29" sw={2.4}><path d="M13 7.500a10 10 0 1 0 8.500 9.500M10.500 2l6 5.300-5.500 5.500" /></Line>
              </ToolGroup>
            </AddressBar>
            <ToolGroup $gap={44} $end>
              <button aria-label="Condividi">
                <Line w={30} h={38} box="0 0 30 38" sw={2.4}><path d="M9.500 13H5a3.500 3.500 0 0 0-3.500 3.500V33A3.500 3.500 0 0 0 5 36.500h20a3.500 3.500 0 0 0 3.500-3.500V16.500A3.500 3.500 0 0 0 25 13h-4.500M15 24V2M9 7.500L15 2l6 5.500" /></Line>
              </button>
              <button aria-label="Nuovo pannello"><Line w={28} box="0 0 28 28" sw={2.6}><path d="M14 1.500v25M1.500 14h25" /></Line></button>
              <button aria-label="Panoramica pannelli">
                <Line w={36} box="0 0 36 36" sw={2.6}><rect x="9.500" y="9.500" width="25" height="25" rx="4.500" /><path d="M9.500 27H6a4.500 4.500 0 0 1-4.500-4.500V6A4.500 4.500 0 0 1 6 1.500h16.500A4.500 4.500 0 0 1 27 6v3.500" /></Line>
              </button>
            </ToolGroup>
          </Toolbar>

          <TabStrip role="tablist">
            <Tab role="tab">
              <Favicon $bg="#dcdcdd">
                <svg width="28" height="28" viewBox="0 0 28 28"><circle cx="14" cy="14" r="11.800" fill="none" stroke="#000" strokeWidth="2.800" /><path d="M11 9v10l8-5z" fill="#000" stroke="#000" strokeWidth="1.500" strokeLinejoin="round" /></svg>
              </Favicon>
              <TabTitle>Sora</TabTitle>
            </Tab>
            <Tab role="tab">
              <Favicon><Blocks size={25} /></Favicon>
              <TabTitle>AIMessageCenter - Replit</TabTitle>
            </Tab>
            <Tab role="tab" aria-selected="true" $active>
              <Favicon $size={32} $bg="#96959f">R</Favicon>
              <TabTitle>https://0ee1b34a-0d49-41fc-b9f0-9c6ccdab6ff8-00-3cskfu...</TabTitle>
            </Tab>
            <Tab role="tab">
              <Favicon $bg="#dfe3ec">
                <svg width="32" height="32" viewBox="0 0 32 32">
                  <rect width="32" height="32" rx="5" fill="#2456cc" />
                  <path d="M15.500 20C11 19 4 14 4 8.500c0-3 4-3.500 6.500-1 3 3 4.500 7.500 5 12.500zM16.500 20c4.500-1 11.500-6 11.500-11.500 0-3-4-3.500-6.500-1-3 3-4.500 7.500-5 12.500zM15.500 20c-3 0-6.500 1-6.500 4.500 0 3 3.500 3 4.800 1 1-1.500 1.700-3.500 1.700-5.500zM16.500 20c3 0 6.500 2 6.500 5.500 0 3-3.500 3-4.800 1-1-1.500-1.700-4.500-1.700-6.500z" fill="#fff" />
                </svg>
              </Favicon>
              <TabTitle>Build | Google AI Studio</TabTitle>
            </Tab>
          </TabStrip>

          <Page>
            <ChatCard>
              <ChatHeader>
                <Logo>B.</Logo>
                <Title>AI-DermaSense</Title>
              </ChatHeader>
              <Messages>
                <Bubble>
                  <Options>
                    <Option disabled><Answer prefix="A)">Donna</Answer></Option>
                    <Option disabled><Answer prefix="B)">Uomo</Answer></Option>
                    <Option disabled><Answer prefix="C)">Altro / Preferisco non specificare</Answer></Option>
                  </Options>
                  <Status>✓ Risposta già fornita</Status>
                </Bubble>
                <Bubble $mine>Uomo</Bubble>
                <Bubble>
                  <Text>Ottimo! Questo mi aiuta a inquadrare meglio le tue esigenze.</Text>
                  <Text $last>Prendi farmaci ormonali (come pillola, anello, cerotto)?</Text>
                  <Options>
                    <Option><Answer prefix="A)">Sì</Answer></Option>
                    <Option><Answer prefix="B)">No</Answer></Option>
                  </Options>
                </Bubble>
              </Messages>
              <Composer onSubmit={(e) => e.preventDefault()}>
                <button type="button" aria-label="Allega file">
                  <Line box="0 0 24 24"><path d="m21.440 11.050-9.190 9.190a6 6 0 0 1-8.490-8.490l8.570-8.570A4 4 0 1 1 18 8.840l-8.590 8.570a2 2 0 0 1-2.830-2.830l8.490-8.480" /></Line>
                </button>
                <MessageInput aria-label="Messaggio" placeholder="Scrivi il tuo messaggio..." />
                <button type="button" aria-label="Detta">
                  <Line box="0 0 24 24"><path d="M12 2a3 3 0 0 0-3 3v7a3 3 0 0 0 6 0V5a3 3 0 0 0-3-3zM19 10v2a7 7 0 0 1-14 0v-2M12 19v3" /></Line>
                </button>
                <SendButton aria-label="Invia"><HiPaperAirplane size={32} /></SendButton>
              </Composer>
            </ChatCard>
          </Page>
        </Browser>
      </BackWindow>

      <DockBar>
        {APPS.map((a) => (
          <DockItem key={a.name} aria-label={a.name} $running={a.running}>
            <Tile $bg={a.bg} $color={a.color} $round={a.round}>{a.art}</Tile>
            {a.badge && <Badge>{a.badge}</Badge>}
          </DockItem>
        ))}
        <DockItem aria-label="Notion"><NotionArt /></DockItem>
        <DockItem aria-label="Steam">
          <SteamTile $round $bg="linear-gradient(#16283c, #10264d 30%, #1f5c8c 70%, #3f93c2)" $color="#e4e2ee"><FaSteamSymbol size={91} /></SteamTile>
        </DockItem>
        <DockSeparator />
        <DockItem $width={91} aria-label="Cestino"><Trash /></DockItem>
      </DockBar>
    </Desktop>
  );
}
